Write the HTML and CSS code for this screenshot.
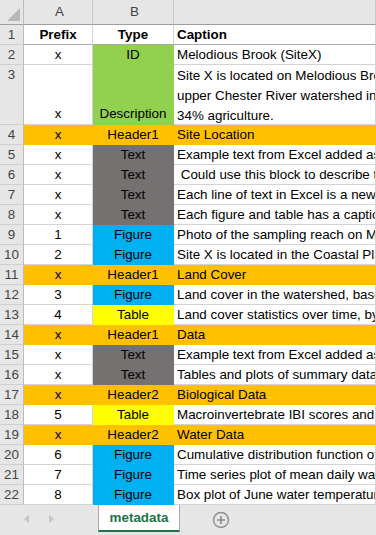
FILE: index.html
```html
<!DOCTYPE html>
<html lang="en">
<head>
    <meta charset="UTF-8">
    <title>metadata</title>
    <link rel="stylesheet" href="styles.css">
</head>
<body>
    <div class="sheet">
        <div class="row colhead">
            <div class="num corner"><span class="tri"></span></div>
            <div class="cell">A</div>
            <div class="cell">B</div>
            <div class="cell"></div>
        </div>

        <div class="row head">
            <div class="num">1</div>
            <div class="cell center">Prefix</div>
            <div class="cell center">Type</div>
            <div class="cell">Caption</div>
        </div>
        <div class="row">
            <div class="num">2</div>
            <div class="cell center">x</div>
            <div class="cell center green">ID</div>
            <div class="cell">Melodious Brook (SiteX)</div>
        </div>
        <div class="row tall">
            <div class="num">3</div>
            <div class="cell center">x</div>
            <div class="cell center green">Description</div>
            <div class="cell wrap">Site X is located on Melodious Brook, a tributary of the<br>upper Chester River watershed in the Coastal Plain with<br>34% agriculture.</div>
        </div>
        <div class="row orange">
            <div class="num">4</div>
            <div class="cell center">x</div>
            <div class="cell center">Header1</div>
            <div class="cell">Site Location</div>
        </div>
        <div class="row">
            <div class="num">5</div>
            <div class="cell center">x</div>
            <div class="cell center gray">Text</div>
            <div class="cell">Example text from Excel added as a paragraph</div>
        </div>
        <div class="row">
            <div class="num">6</div>
            <div class="cell center">x</div>
            <div class="cell center gray">Text</div>
            <div class="cell">&nbsp;Could use this block to describe the site</div>
        </div>
        <div class="row">
            <div class="num">7</div>
            <div class="cell center">x</div>
            <div class="cell center gray">Text</div>
            <div class="cell">Each line of text in Excel is a new paragraph</div>
        </div>
        <div class="row">
            <div class="num">8</div>
            <div class="cell center">x</div>
            <div class="cell center gray">Text</div>
            <div class="cell">Each figure and table has a caption</div>
        </div>
        <div class="row">
            <div class="num">9</div>
            <div class="cell center">1</div>
            <div class="cell center blue">Figure</div>
            <div class="cell">Photo of the sampling reach on Melodious Brook</div>
        </div>
        <div class="row">
            <div class="num">10</div>
            <div class="cell center">2</div>
            <div class="cell center blue">Figure</div>
            <div class="cell">Site X is located in the Coastal Plain</div>
        </div>
        <div class="row orange">
            <div class="num">11</div>
            <div class="cell center">x</div>
            <div class="cell center">Header1</div>
            <div class="cell">Land Cover</div>
        </div>
        <div class="row">
            <div class="num">12</div>
            <div class="cell center">3</div>
            <div class="cell center blue">Figure</div>
            <div class="cell">Land cover in the watershed, based on NLCD</div>
        </div>
        <div class="row">
            <div class="num">13</div>
            <div class="cell center">4</div>
            <div class="cell center yellow">Table</div>
            <div class="cell">Land cover statistics over time, by category</div>
        </div>
        <div class="row orange">
            <div class="num">14</div>
            <div class="cell center">x</div>
            <div class="cell center">Header1</div>
            <div class="cell">Data</div>
        </div>
        <div class="row">
            <div class="num">15</div>
            <div class="cell center">x</div>
            <div class="cell center gray">Text</div>
            <div class="cell">Example text from Excel added as a paragraph</div>
        </div>
        <div class="row">
            <div class="num">16</div>
            <div class="cell center">x</div>
            <div class="cell center gray">Text</div>
            <div class="cell">Tables and plots of summary data follow</div>
        </div>
        <div class="row orange">
            <div class="num">17</div>
            <div class="cell center">x</div>
            <div class="cell center">Header2</div>
            <div class="cell">Biological Data</div>
        </div>
        <div class="row">
            <div class="num">18</div>
            <div class="cell center">5</div>
            <div class="cell center yellow">Table</div>
            <div class="cell">Macroinvertebrate IBI scores and ratings</div>
        </div>
        <div class="row orange">
            <div class="num">19</div>
            <div class="cell center">x</div>
            <div class="cell center">Header2</div>
            <div class="cell">Water Data</div>
        </div>
        <div class="row">
            <div class="num">20</div>
            <div class="cell center">6</div>
            <div class="cell center blue">Figure</div>
            <div class="cell">Cumulative distribution function of temperature</div>
        </div>
        <div class="row">
            <div class="num">21</div>
            <div class="cell center">7</div>
            <div class="cell center blue">Figure</div>
            <div class="cell">Time series plot of mean daily water temperature</div>
        </div>
        <div class="row">
            <div class="num">22</div>
            <div class="cell center">8</div>
            <div class="cell center blue">Figure</div>
            <div class="cell">Box plot of June water temperature by year</div>
        </div>
        <div class="row sliver">
            <div class="num"></div>
            <div class="cell"></div>
            <div class="cell yellow"></div>
            <div class="cell"></div>
        </div>
    </div>

    <div class="tabbar">
        <div class="nav">
            <span class="arrow left"></span>
            <span class="arrow right"></span>
        </div>
        <div class="tab">metadata</div>
        <svg class="add" width="18" height="18" viewBox="0 0 18 18">
            <circle cx="9" cy="9" r="7.5" fill="none" stroke="#8c8c8c" stroke-width="1.4"/>
            <path d="M9 5v8M5 9h8" stroke="#8c8c8c" stroke-width="1.6"/>
        </svg>
    </div>
</body>
</html>
```

FILE: styles.css
```css
html, body {
    margin: 0;
    padding: 0;
    background: #ffffff;
    overflow: hidden;
}

body {
    width: 376px;
    height: 535px;
    font-family: "Liberation Sans", Arial, sans-serif;
    font-size: 13.4px;
    color: #000000;
    display: flex;
    flex-direction: column;
}

.sheet {
    flex: 1;
    overflow: hidden;
}

.row {
    display: grid;
    grid-template-columns: 24px 69px 81px 1fr;
    height: 20px;
}

.cell, .num {
    box-sizing: border-box;
    border-right: 1px solid #d4d4d4;
    border-bottom: 1px solid #d4d4d4;
    line-height: 20px;
    white-space: nowrap;
    overflow: hidden;
    padding-left: 3px;
}

.center {
    text-align: center;
    padding-left: 0;
}

.num {
    background: #e6e6e6;
    color: #444444;
    text-align: center;
    padding-left: 0;
    border-right-color: #bcbcbc;
    border-bottom-color: #cfcfcf;
}

.colhead {
    height: 25px;
}

.colhead .cell {
    background: #e6e6e6;
    color: #444444;
    text-align: center;
    line-height: 24px;
    border-right-color: #c8c8c8;
    border-bottom-color: #9e9e9e;
}

.colhead .num {
    border-bottom-color: #9e9e9e;
}

.corner {
    position: relative;
}

.tri {
    position: absolute;
    right: 3px;
    bottom: 3px;
    width: 0;
    height: 0;
    border-left: 13px solid transparent;
    border-bottom: 13px solid #b8b8b8;
}

.head .cell {
    font-weight: bold;
    border-bottom-color: #a8a8a8;
}

.tall {
    height: 60px;
}

.tall .cell {
    display: flex;
    align-items: flex-end;
    justify-content: center;
}

.tall .wrap {
    display: block;
    line-height: 20px;
    padding-top: 1px;
}

.green { background: #92d050; border-color: #92d050; }
.gray { background: #767171; border-color: #767171; }
.blue { background: #00b0f0; border-color: #00b0f0; }
.yellow { background: #ffff00; border-color: #ffff00; }

.orange .cell {
    background: #ffc000;
    border-color: #ffc000;
}

.sliver {
    height: 2px;
}

.tabbar {
    height: 30px;
    flex-shrink: 0;
    background: #e6e6e6;
    display: flex;
    align-items: flex-start;
}

.nav {
    width: 98px;
    display: flex;
    gap: 20px;
    padding: 10px 0 0 24px;
    box-sizing: border-box;
}

.arrow {
    width: 0;
    height: 0;
    border-top: 4px solid transparent;
    border-bottom: 4px solid transparent;
}

.arrow.left {
    border-right: 5px solid #c4c4c4;
}

.arrow.right {
    border-left: 5px solid #c4c4c4;
}

.tab {
    width: 82px;
    height: 27px;
    box-sizing: border-box;
    background: #ffffff;
    border-left: 1px solid #ababab;
    border-right: 1px solid #ababab;
    border-bottom: 2px solid #217346;
    color: #217346;
    font-weight: bold;
    font-size: 13.4px;
    text-align: center;
    line-height: 26px;
}

.add {
    margin: 6px 0 0 32px;
}
```
